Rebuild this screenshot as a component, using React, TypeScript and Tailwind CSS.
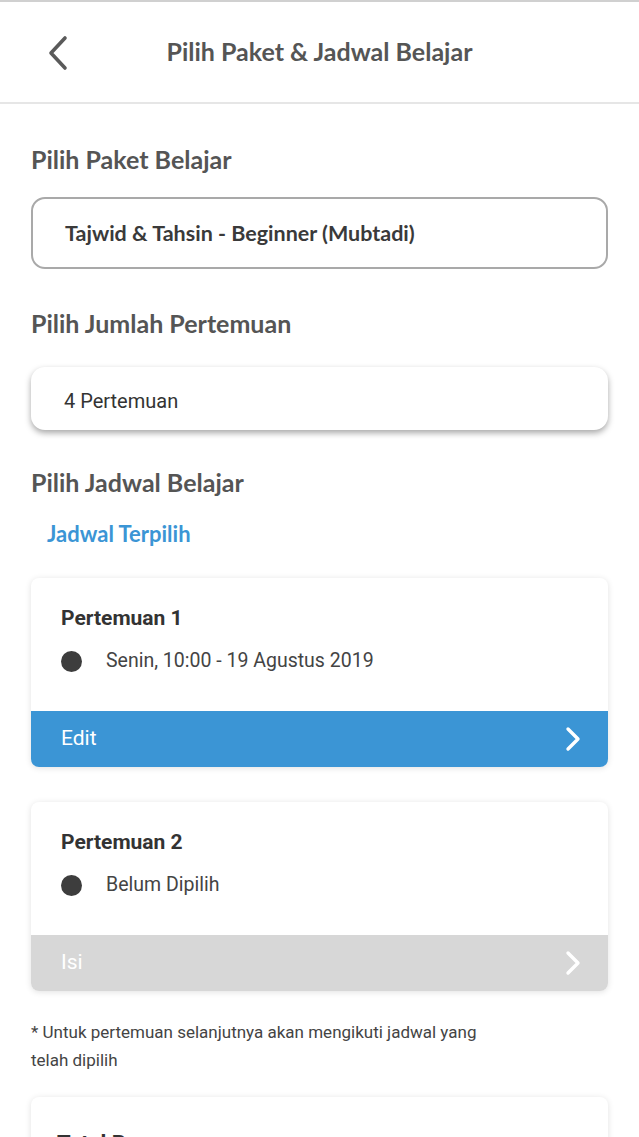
import React from 'react';

const heading = "font-['Lato',sans-serif]";
const body = "font-['Roboto',sans-serif]";

function Chevron({ className = '' }: { className?: string }) {
  return (
    <svg viewBox="0 0 18 26" className={className} fill="none" stroke="currentColor" strokeWidth={3.4} strokeLinecap="round" strokeLinejoin="round">
      <path d="M4 3l10 10-10 10" />
    </svg>
  );
}

interface MeetingProps {
  title: string;
  value: string;
  action: string;
  active?: boolean;
}

function MeetingCard({ title, value, action, active }: MeetingProps) {
  return (
    <div className="rounded-lg bg-white shadow-[0_1px_6px_rgba(0,0,0,0.12)]">
      <div className="px-[30px] pt-[27px] pb-[37px]">
        <div className={`${body} text-[21px] font-bold text-[#333] leading-[26px]`}>{title}</div>
        <div className="mt-[17px] flex h-[26px] items-center gap-[24px]">
          <div className="h-[21px] w-[21px] rounded-full bg-[#3d3d3d]" />
          <span className={`${body} text-[19.5px] text-[#444]`}>{value}</span>
        </div>
      </div>
      <div
        className={`flex h-[56px] items-center justify-between rounded-b-lg pl-[30px] pr-[26px] ${
          active ? 'bg-[#3b95d5]' : 'bg-[#d7d7d7]'
        }`}
      >
        <span className={`${body} text-[21px] text-white`}>{action}</span>
        <Chevron className="h-[26px] w-[18px] text-white" />
      </div>
    </div>
  );
}

export default function App() {
  return (
    <div className="h-[1137px] overflow-hidden bg-white border-t-2 border-[#d0d0d0]">
      <header className="relative flex h-[102px] items-center justify-center border-b-2 border-[#e6e6e6]">
        <svg viewBox="0 0 24 36" className="absolute left-[46px] top-[33px] h-[36px] w-[24px] text-[#5a5a5a]" fill="none" stroke="currentColor" strokeWidth={3.6} strokeLinecap="round" strokeLinejoin="round">
          <path d="M19 3L5 18l14 15" />
        </svg>
        <h1 className={`${heading} text-[25px] font-bold text-[#555]`}>Pilih Paket &amp; Jadwal Belajar</h1>
      </header>

      <main className="px-[31px]">
        <h2 className={`${heading} mt-[40px] text-[25px] font-bold text-[#555] leading-[30px]`}>Pilih Paket Belajar</h2>
        <div className="mt-[23px] flex h-[72px] items-center rounded-[14px] border-2 border-[#a9a9a9] px-[32px]">
          <span className={`${heading} text-[21.5px] font-bold text-[#3a3a3a]`}>Tajwid &amp; Tahsin - Beginner (Mubtadi)</span>
        </div>

        <h2 className={`${heading} mt-[39px] text-[25px] font-bold text-[#555] leading-[30px]`}>Pilih Jumlah Pertemuan</h2>
        <div className="mt-[29px] flex h-[63px] items-center rounded-[14px] bg-white px-[33px] pt-[4px] shadow-[0_3px_6px_rgba(0,0,0,0.35)]">
          <span className={`${body} text-[20px] text-[#333]`}>4 Pertemuan</span>
        </div>

        <h2 className={`${heading} mt-[37px] text-[25px] font-bold text-[#555] leading-[30px]`}>Pilih Jadwal Belajar</h2>
        <div className={`${heading} mt-[24px] pl-[16px] text-[22px] font-bold text-[#3b95d5] leading-[26px]`}>Jadwal Terpilih</div>

        <div className="mt-[31px] flex flex-col gap-[35px]">
          <MeetingCard title="Pertemuan 1" value="Senin, 10:00 - 19 Agustus 2019" action="Edit" active />
          <MeetingCard title="Pertemuan 2" value="Belum Dipilih" action="Isi" />
        </div>

        <p className={`${body} mt-[27px] w-[470px] text-[17px] leading-[28px] text-[#444]`}>
          * Untuk pertemuan selanjutnya akan mengikuti jadwal yang telah dipilih
        </p>

        <div className="mt-[23px] rounded-lg bg-white px-[26px] pt-[30px] pb-[30px] shadow-[0_1px_6px_rgba(0,0,0,0.12)]">
          <div className={`${body} text-[22px] font-bold text-[#333]`}>Total Bayar</div>
        </div>
      </main>
    </div>
  );
}
